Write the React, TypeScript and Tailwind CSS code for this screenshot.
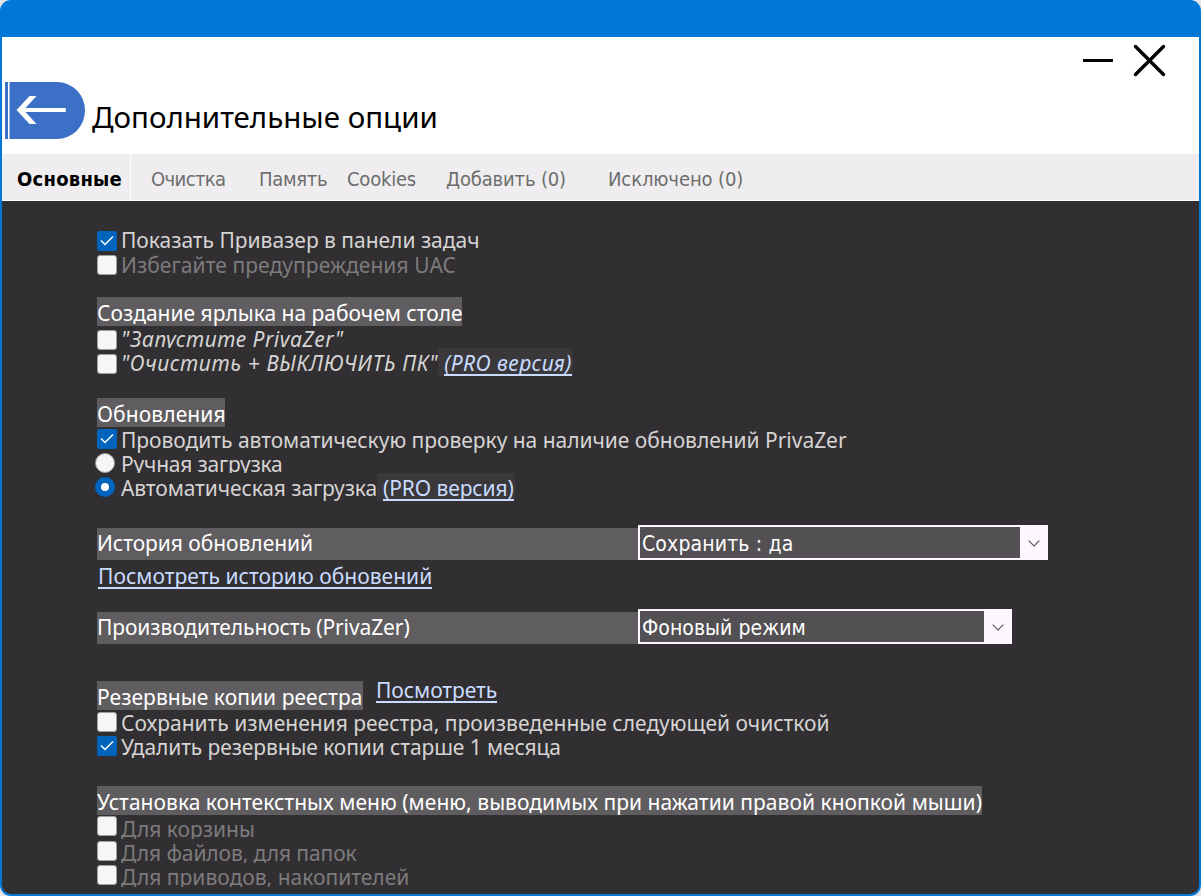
import { type ReactNode } from "react";
import clsx from "clsx";

const tabs = [
  { label: "Основные", className: "w-[129px] pl-[15px] border-r border-white font-bold text-black tracking-[0.25px]" },
  { label: "Очистка", className: "w-[109px] pl-5 text-[#6d6d6d] tracking-[-0.6px]" },
  { label: "Память", className: "w-[87px] pl-[19px] text-[#6d6d6d] tracking-[-0.3px]" },
  { label: "Cookies", className: "w-[99px] pl-5 text-[#6d6d6d] tracking-[-0.2px]" },
  { label: "Добавить (0)", className: "w-[162px] pl-5 text-[#6d6d6d] tracking-[-0.15px]" },
  { label: "Исключено (0)", className: "w-[170px] pl-5 text-[#6d6d6d] tracking-[-0.1px]" },
];

type BoxProps = { checked?: boolean; className?: string };

const Check = ({ checked, className }: BoxProps) => (
  <span
    className={clsx(
      "grid h-5 w-5 shrink-0 place-items-center",
      checked ? "rounded-[2px] bg-[#0064bd]" : "rounded-[3px] border border-[#a09ea0] bg-[#f7f5f8]",
      className,
    )}
  >
    {checked && (
      <svg width="14" height="12" viewBox="0 0 14 12" fill="none" stroke="#fff" strokeWidth="1.5">
        <path d="M1 5.5 5 9.5 13 1.5" />
      </svg>
    )}
  </span>
);

const Radio = ({ checked, className }: BoxProps) => (
  <span
    className={clsx(
      "-ml-0.5 mr-0.5 grid h-5 w-5 shrink-0 place-items-center rounded-full",
      checked ? "bg-[#0064bd]" : "border border-[#a09ea0] bg-[#f7f5f8]",
      className,
    )}
  >
    {checked && <span className="h-2 w-2 rounded-full bg-white" />}
  </span>
);

type OptionProps = {
  box: ReactNode;
  children: ReactNode;
  className?: string;
  textClass?: string;
};

const Option = ({ box, children, className, textClass }: OptionProps) => (
  <div className={clsx("flex h-6 items-start", className)}>
    {box}
    <span className={clsx("ml-1 whitespace-nowrap", textClass)}>{children}</span>
  </div>
);

const Heading = ({ children, className }: { children: ReactNode; className?: string }) => (
  <h2 className={clsx("h-[29px] whitespace-nowrap bg-[#5f5d5f] pt-[3px] leading-[27px] text-white", className)}>
    {children}
  </h2>
);

const Link = ({ children, className }: { children: ReactNode; className?: string }) => (
  <a className={clsx("block whitespace-nowrap border-b-2 border-[#c9dcff] text-[#c9dcff]", className)}>{children}</a>
);

const Select = ({ value, className }: { value: string; className?: string }) => (
  <div
    className={clsx(
      "flex h-[35px] border-2 border-[#fdf8fe] bg-[#525052] font-['DejaVu_Sans_Condensed','DejaVu_Sans',sans-serif] text-[21px] leading-[35px] text-white",
      className,
    )}
  >
    <span className="h-[31px] flex-1 whitespace-nowrap pl-0.5">{value}</span>
    <span className="grid h-[31px] w-[26px] place-items-center bg-[#fdf8fe] pl-0.5 pt-px">
      <svg width="12" height="7" viewBox="0 0 12 7" fill="none" stroke="#555" strokeWidth="1.1">
        <path d="M.7.7 6 6 11.3.7" />
      </svg>
    </span>
  </div>
);

const App = () => (
  <div className="h-[896px] w-[1201px] bg-[#e3e3e8] font-['Noto_Sans',sans-serif] text-[21px]">
    <div className="flex h-[896px] flex-col overflow-hidden rounded-[11px] bg-[#0078d7] px-0.5 pb-0.5 pt-[37px]">
      <header className="flex h-[117px] shrink-0 justify-between bg-white">
        <div className="flex">
          <button aria-label="Назад" className="ml-[3px] mt-[45px] h-[57px] w-20">
            <svg width="80" height="57" viewBox="0 0 80 57">
              <path d="M0 0h3v57H0zM4.5 0H52a28 28.5 0 0 1 0 57H4.5z" fill="#3b70c6" />
              <path d="M11.5 28 24.5 14h7L20.5 26h40.3v4H20.5l11 12h-7z" fill="#fff" />
            </svg>
          </button>
          <h1 className="ml-[7px] mt-[60px] whitespace-nowrap text-[29.5px] leading-10 text-black">
            Дополнительные опции
          </h1>
        </div>
        <div className="mr-[33px] mt-[7px] flex gap-5">
          <button aria-label="Свернуть" className="h-[33px]">
            <svg width="30" height="33" viewBox="0 0 30 33">
              <path d="M0 16.5h30" stroke="#000" strokeWidth="3" />
            </svg>
          </button>
          <button aria-label="Закрыть" className="h-[33px]">
            <svg width="33" height="33" viewBox="0 0 33 33">
              <path d="M2.5 2.5l28 28M30.5 2.5l-28 28" stroke="#000" strokeWidth="3.4" strokeLinecap="round" />
            </svg>
          </button>
        </div>
      </header>

      <nav className="flex h-[47px] shrink-0 border-b border-white bg-[#efedef] font-['DejaVu_Sans_Condensed','DejaVu_Sans',sans-serif] text-[20px] leading-[50px]">
        {tabs.map((t) => (
          <a key={t.label} className={clsx("h-[46px] whitespace-nowrap", t.className)}>
            {t.label}
          </a>
        ))}
      </nav>

      <main className="flex flex-1 flex-col items-start overflow-hidden rounded-b-[9px] bg-[#312f31] pl-[95px] pt-[27px] text-[#d6d4d4]">
        <Option box={<Check checked className="mt-[3px]" />} textClass="leading-6 tracking-[-0.02px]">
          Показать Привазер в панели задач
        </Option>
        <Option box={<Check className="mt-0.5" />} className="mt-px" textClass="leading-6 tracking-[0.07px] text-[#7d7b7d]">
          Избегайте предупреждения UAC
        </Option>

        <Heading className="mt-5 w-[365px]">Создание ярлыка на рабочем столе</Heading>
        <Option
          box={<Check className="mt-1" />}
          textClass="h-[22px] overflow-hidden pr-1 italic leading-[26px] tracking-[0.5px]"
        >
          "Запустите PrivaZer"
        </Option>
        <Option box={<Check className="mt-1" />} textClass="italic leading-[26px] tracking-[0.62px]">
          <span className="flex">
            "Очистить + ВЫКЛЮЧИТЬ ПК"
            <span className="-mt-0.5 h-7 bg-[#3a383a] pl-1.5 pr-px">
              <Link className="h-7 leading-[30px] tracking-[0.45px]">(PRO версия)</Link>
            </span>
          </span>
        </Option>

        <Heading className="mt-6 w-32 tracking-[0.1px]">Обновления</Heading>
        <Option box={<Check checked className="mt-0.5" />} textClass="leading-[26px] tracking-[-0.03px]">
          Проводить автоматическую проверку на наличие обновлений PrivaZer
        </Option>
        <Option box={<Radio className="mt-0.5" />} textClass="h-[22px] overflow-hidden leading-[26px] tracking-[-0.2px]">
          Ручная загрузка
        </Option>
        <Option box={<Radio checked className="mt-0.5" />} textClass="leading-[26px] tracking-[-0.1px]">
          <span className="flex">
            Автоматическая загрузка
            <span className="-mt-0.5 h-7 bg-[#3a383a] pl-1.5 pr-px">
              <Link className="h-7 leading-[30px]">(PRO версия)</Link>
            </span>
          </span>
        </Option>

        <div className="mt-[26px] flex items-end">
          <div className="h-8 w-[541px] bg-[#5f5d5f] leading-[30px] tracking-[-0.04px] text-white">История обновлений</div>
          <Select value="Сохранить : да" className="w-[410px] tracking-[0.15px]" />
        </div>
        <Link className="ml-px mt-1 h-[25px] leading-6 tracking-[0.03px]">Посмотреть историю обновений</Link>
        <div className="mt-5 flex items-end">
          <div className="h-8 w-[541px] bg-[#5f5d5f] leading-[30px] tracking-[-0.1px] text-white">
            Производительность (PrivaZer)
          </div>
          <Select value="Фоновый режим" className="w-[374px] tracking-[0.05px]" />
        </div>

        <div className="mt-[35px] flex h-[31px] items-start">
          <Heading className="mt-0.5 w-[266px] tracking-[0.05px]">Резервные копии реестра</Heading>
          <Link className="ml-[13px] h-6 leading-[22px] tracking-[-0.05px]">Посмотреть</Link>
        </div>
        <Option box={<Check className="mt-0.5" />} textClass="leading-[26px]">
          Сохранить изменения реестра, произведенные следующей очисткой
        </Option>
        <Option box={<Check checked className="mt-0.5" />} textClass="leading-[26px] tracking-[-0.1px]">
          Удалить резервные копии старше 1 месяца
        </Option>

        <Heading className="mt-7 w-[885px] tracking-[0.03px]">
          Установка контекстных меню (меню, выводимых при нажатии правой кнопкой мыши)
        </Heading>
        <Option box={<Check className="mt-px" />} textClass="h-6 overflow-hidden leading-[28px] text-[#7d7b7d]">
          Для корзины
        </Option>
        <Option
          box={<Check className="mt-0.5" />}
          textClass="h-6 overflow-hidden leading-[28px] tracking-[-0.1px] text-[#7d7b7d]"
        >
          Для файлов, для папок
        </Option>
        <Option box={<Check className="mt-0.5" />} textClass="h-6 overflow-hidden leading-[28px] text-[#7d7b7d]">
          Для приводов, накопителей
        </Option>
      </main>
    </div>
  </div>
);

export default App;
